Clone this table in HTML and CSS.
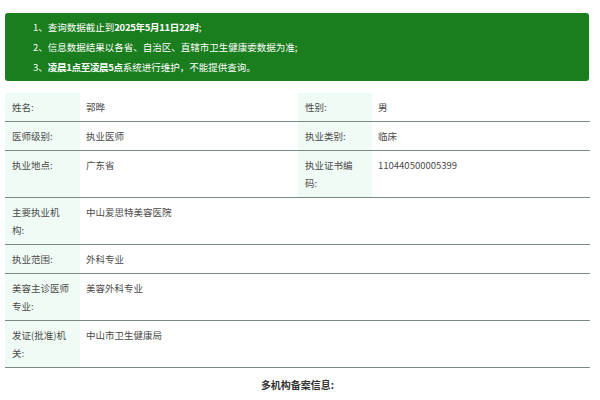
FILE: index.html
```html
<!DOCTYPE html>
<html lang="zh-CN">
<head>
<meta charset="utf-8">
<title>医师信息查询</title>
<link rel="stylesheet" href="styles.css">
</head>
<body>
<div class="page">
  <div class="notice">
    <p>1、查询数据截止到<b>2025年5月11日22时</b>;</p>
    <p>2、信息数据结果以各省、自治区、直辖市卫生健康委数据为准;</p>
    <p>3、<b>凌晨1点至凌晨5点</b>系统进行维护，不能提供查询。</p>
  </div>
  <table class="info">
    <colgroup>
      <col class="c-label1"><col class="c-value1"><col class="c-label2"><col class="c-value2">
    </colgroup>
    <tr>
      <td class="label">姓名:</td><td class="value">郭晔</td>
      <td class="label">性别:</td><td class="value">男</td>
    </tr>
    <tr>
      <td class="label">医师级别:</td><td class="value">执业医师</td>
      <td class="label">执业类别:</td><td class="value">临床</td>
    </tr>
    <tr>
      <td class="label">执业地点:</td><td class="value">广东省</td>
      <td class="label">执业证书编码:</td><td class="value">110440500005399</td>
    </tr>
    <tr>
      <td class="label">主要执业机构:</td><td class="value" colspan="3">中山爱思特美容医院</td>
    </tr>
    <tr>
      <td class="label">执业范围:</td><td class="value" colspan="3">外科专业</td>
    </tr>
    <tr>
      <td class="label">美容主诊医师专业:</td><td class="value" colspan="3">美容外科专业</td>
    </tr>
    <tr>
      <td class="label">发证(批准)机关:</td><td class="value" colspan="3">中山市卫生健康局</td>
    </tr>
  </table>
  <div class="section-title">多机构备案信息:</div>
</div>
</body>
</html>
```
FILE: styles.css
```css
* { box-sizing: border-box; }
html, body { margin: 0; padding: 0; background: #fff; }
body {
  font-family: "Noto Sans CJK SC", "Noto Sans", sans-serif;
  color: #444;
}
.page {
  width: 600px;
  padding: 13px 10px 0 5px;
}
.notice {
  width: 584px;
  background: #1a7d1e;
  border-radius: 3px;
  color: #fff;
  padding: 4px 10px 4px 28px;
  font-size: 9.5px;
  line-height: 20px;
}
.notice p { margin: 0; }
.notice b { font-weight: bold; letter-spacing: -0.3px; }
.info {
  margin-top: 12px;
  width: 585px;
  border-collapse: collapse;
  table-layout: fixed;
  font-size: 9.5px;
  line-height: 18px;
}
.c-label1 { width: 75px; }
.c-value1 { width: 218px; }
.c-label2 { width: 74px; }
.c-value2 { width: 218px; }
.info td {
  vertical-align: top;
  border-bottom: 1px solid #7b8a82;
  padding: 5px 10px 5px 7px;
  color: #4a4a4a;
}
.info td.label { background: #f1fbf5; }
.info td.value { padding-left: 6px; }
.section-title {
  width: 585px;
  text-align: center;
  font-weight: bold;
  font-size: 10px;
  color: #333;
  padding-top: 8px;
  line-height: 18px;
}
```
